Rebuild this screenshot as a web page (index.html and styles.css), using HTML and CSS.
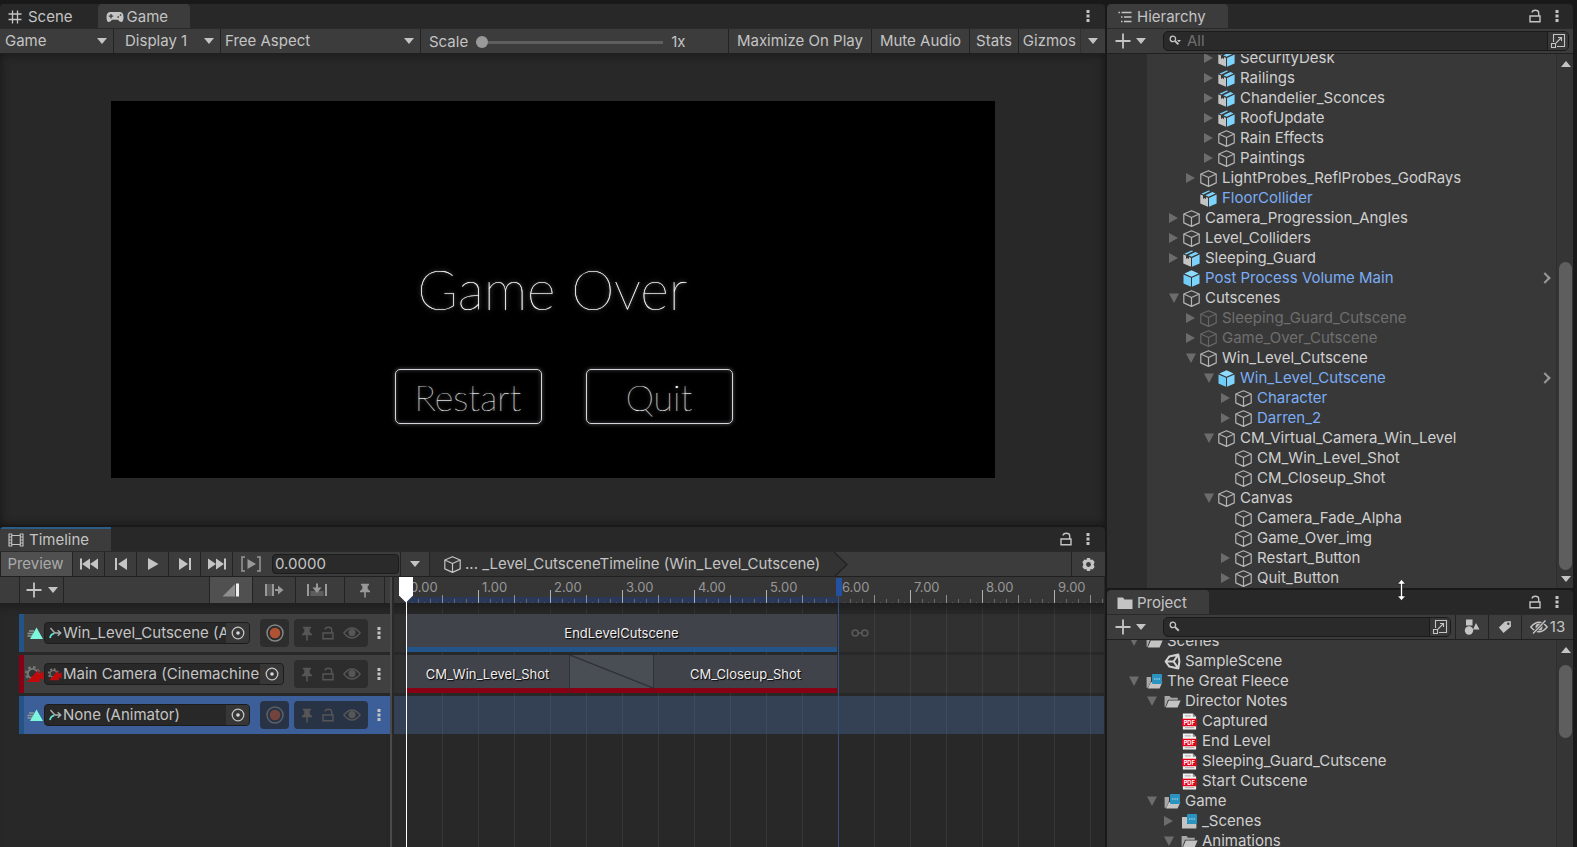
FILE: index.html
```
<!DOCTYPE html>
<html lang="en">
  <head>
    <meta charset="UTF-8" />
    <meta name="viewport" content="width=device-width, initial-scale=1.0" />
    <title>The Great Fleece - Editor</title>
    <link rel="stylesheet" href="styles.css">
  </head>
  <body>
    <!-- icon sprite -->
    <svg class="sprite" aria-hidden="true">
      <symbol id="cube" viewBox="0 0 17 17">
        <path d="M8.5 0.7L16.2 4V12.9L8.5 16.4L0.8 12.9V4ZM0.8 4L8.5 7.5L16.2 4M8.5 7.5V16.4" fill="none" stroke="currentColor" stroke-width="1.2" stroke-linejoin="round"/>
      </symbol>
      <symbol id="prefab" viewBox="0 0 17 17">
        <path d="M8.5 0.3L15.6 3.5L8.5 6.8L1.4 3.5Z" fill="#8fdcff"/>
        <path d="M0.5 4.5L8 7.8V16.8L0.5 13.4Z" fill="#6fcdf7"/>
        <path d="M16.5 4.5L9 7.8V16.8L16.5 13.4Z" fill="#7dd3fb"/>
      </symbol>
      <symbol id="model" viewBox="0 0 17 17">
        <path d="M0.3 4.5L3 5.6V9L4.5 8L6 9.2V7L8 7.9V16.8L0.3 13.4Z" fill="#c4c4c4"/>
        <path d="M1.4 3.7L8.6 0.4L10.4 1.1L3.4 4.5ZM5.4 5.3L12.4 2L15.6 3.4L8.5 6.8Z" fill="#7dd3fb"/>
        <path d="M16.6 4.5L9 7.9V16.8L16.6 13.4Z" fill="#7dd3fb"/>
      </symbol>
      <symbol id="lock" viewBox="0 0 12 14">
        <path d="M1 7H11V12.8H1ZM9.7 7V4Q9.7 1.2 6.3 1.2Q3.3 1.2 3 3.5" fill="none" stroke="currentColor" stroke-width="1.4"/>
      </symbol>
      <symbol id="dots" viewBox="0 0 4 14">
        <path d="M0.5 1H3.5V4H0.5ZM0.5 5.5H3.5V8.5H0.5ZM0.5 10H3.5V13H0.5Z" fill="currentColor"/>
      </symbol>
      <symbol id="plus" viewBox="0 0 16 16">
        <path d="M8 0.5V15.5M0.5 8H15.5" stroke="currentColor" stroke-width="1.8"/>
      </symbol>
      <symbol id="popout" viewBox="0 0 16 16">
        <path d="M3.5 9V1.5H14.5V13.5H7M1.5 10.5H5.5V14.5H1.5ZM6 10L11.5 4.5M8 4.5H11.5V8" fill="none" stroke="currentColor" stroke-width="1.1"/>
      </symbol>
      <symbol id="magnifier" viewBox="0 0 12 12">
        <path d="M5.9 5.9L9.8 9.8" stroke="currentColor" stroke-width="2"/>
        <circle cx="3.9" cy="3.9" r="2.7" fill="none" stroke="currentColor" stroke-width="1.3"/>
      </symbol>
      <symbol id="magnifier-menu" viewBox="0 0 12 12">
        <path d="M5.9 5.9L9.4 9.4" stroke="currentColor" stroke-width="2"/>
        <circle cx="3.9" cy="3.9" r="2.7" fill="none" stroke="currentColor" stroke-width="1.3"/>
        <path d="M8 5H12L10 7.2Z" fill="currentColor"/>
      </symbol>
      <symbol id="folder" viewBox="0 0 16 14">
        <path d="M0.5 1.5H6L7.5 3.5H15.5V13H0.5Z" fill="currentColor"/>
      </symbol>
      <symbol id="folder-open" viewBox="0 0 17 14">
        <path d="M0.6 1.5H5.6L7 3.2H13.8V5.2H4L1.4 12.2L0.6 12.5Z" fill="#a8a8a8"/>
        <path d="M4.8 5.9H16.6L13.6 13H1.8Z" fill="#c4c4c4"/>
      </symbol>
      <symbol id="folder-badge" viewBox="0 0 17 17">
        <path d="M0.6 4H5V8L2 14.6L0.6 15Z" fill="#a8a8a8"/>
        <path d="M5 9H16.4L13.6 15.6H1.8Z" fill="#c4c4c4"/>
        <rect x="6" y="1" width="10" height="10" rx="1" fill="#2a93c0"/>
        <path d="M8 6H9.4M10.3 6H11.7M12.6 6H14" stroke="#bfe6f5" stroke-width="1.2"/>
      </symbol>
      <symbol id="folder-closed-badge" viewBox="0 0 17 17">
        <path d="M1 4H6V11H15.4V15.6H1Z" fill="#c4c4c4"/>
        <rect x="6" y="1" width="10" height="10" rx="1" fill="#2a93c0"/>
        <path d="M8 6H9.4M10.3 6H11.7M12.6 6H14" stroke="#bfe6f5" stroke-width="1.2"/>
      </symbol>
      <symbol id="pdf" viewBox="0 0 17 18">
        <path d="M1.5 0.5H12L15.5 4V17.5H1.5Z" fill="#f2f2f2"/>
        <path d="M3.5 3H10M3.5 15.5H13.5" stroke="#b5b5b5" stroke-width="1.2"/>
        <path d="M12 0.5L15.5 4H12Z" fill="#8a8a8a"/>
        <path d="M0.5 6H16V14H0.5Z" fill="#e2051b"/>
        <text class="pdf-label" x="8.2" y="12.4">PDF</text>
      </symbol>
      <symbol id="scene" viewBox="0 0 16 16">
        <path d="M13.5 1.5L5 3.2L1.5 8L5 12.8L13.5 14.5L14.5 8ZM1.5 8H9M9 8L13.5 1.5M9 8L13.5 14.5" fill="none" stroke="#d2d2d2" stroke-width="1.9" stroke-linejoin="round"/>
      </symbol>
      <symbol id="anim" viewBox="0 0 16 13">
        <path d="M2 4H7M0.5 6.5H6M0.5 9H5" stroke="#8a9a98" stroke-width="1.3"/>
        <path d="M9.5 0.5L16 12H3Z" fill="#7cf7dd"/>
      </symbol>
      <symbol id="animator" viewBox="0 0 13 12">
        <path d="M1 11Q1.5 7.5 5.5 6.2" fill="none" stroke="#5fe0cf" stroke-width="1.8"/>
        <path d="M1.5 1L4.5 4.5L6.5 6H11.5M8.7 3.2L11.7 6L8.7 8.8" fill="none" stroke="#a9adad" stroke-width="1.5"/>
      </symbol>
      <symbol id="cinemachine" viewBox="0 0 20 17">
        <circle cx="8.5" cy="7.5" r="6.3" fill="none" stroke="#777" stroke-width="2.4" stroke-dasharray="2.6 2.3"/>
        <circle cx="8.5" cy="7.5" r="4.6" fill="#333" stroke="#777" stroke-width="1.8"/>
        <path d="M3 16L14.5 3.5V8L19.5 5.5V14L15.8 12.3V16Z" fill="#c20a0a"/>
      </symbol>
      <symbol id="pin" viewBox="0 0 12 15">
        <path d="M2 0.8H10V2.4H8.7V6L11 8V9.2H6.8V14.5H5.2V9.2H1V8L3.3 6V2.4H2Z" fill="currentColor"/>
      </symbol>
      <symbol id="eye" viewBox="0 0 18 12">
        <path d="M0.8 6Q9 -4 17.2 6Q9 16 0.8 6Z" fill="none" stroke="currentColor" stroke-width="1.3"/>
        <circle cx="9" cy="5.6" r="3.6" fill="currentColor"/>
      </symbol>
      <symbol id="picker" viewBox="0 0 14 14">
        <circle cx="7" cy="7" r="5.8" fill="none" stroke="#c4c4c4" stroke-width="1.3"/>
        <circle cx="7" cy="7" r="1.8" fill="#d8d8d8"/>
      </symbol>
      <symbol id="record" viewBox="0 0 18 18">
        <circle cx="9" cy="9" r="8" fill="none" stroke="#858585" stroke-width="1.5"/>
        <circle cx="9" cy="9" r="5.3" fill="#b05335"/>
      </symbol>
    </svg>

    <div class="editor">
      <main class="column">
        <section class="panel">
          <header class="tabs">
            <button class="tab tab-scene">
              <svg width="14" height="14" viewBox="0 0 14 14"><path d="M4.5 0.5V13.5M9.5 0.5V13.5M0.5 4H13.5M0.5 9.5H13.5" stroke="currentColor" stroke-width="1.3"/></svg>
              Scene
            </button>
            <button class="tab active tab-game">
              <svg width="18" height="12" viewBox="0 0 18 12"><path d="M4.5 1H13.5Q17.5 1 17.5 6Q17.5 11 15.3 11Q13.5 11 12 8.7H6Q4.5 11 2.7 11Q0.5 11 0.5 6Q0.5 1 4.5 1Z" fill="currentColor"/><path d="M5 3V7.4M2.8 5.2H7.2M11.5 6H13M13.8 4H15.3" stroke="#3c3c3c" stroke-width="1.3"/></svg>
              Game
            </button>
            <div class="tab-tools">
              <button aria-label="Game menu"><svg width="4" height="14"><use href="#dots"/></svg></button>
            </div>
          </header>
          <div class="toolbar">
            <label class="dropdown mode"><select aria-label="View"><option>Game</option></select></label>
            <label class="dropdown display"><select aria-label="Display"><option>Display 1</option></select></label>
            <label class="dropdown aspect"><select aria-label="Aspect"><option>Free Aspect</option></select></label>
            <div class="scale">
              <label for="scale">Scale</label>
              <input type="range" id="scale" min="1" max="5" value="1">
              <output for="scale">1x</output>
            </div>
            <button class="tool wide">Maximize On Play</button>
            <button class="tool wide">Mute Audio</button>
            <button class="tool">Stats</button>
            <button class="tool gizmos">Gizmos</button>
            <button class="tool gizmos-menu" aria-label="Gizmos menu"><i class="caret"></i></button>
          </div>
          <div class="game-view">
            <div class="game-screen">
              <h1>Game Over</h1>
              <div class="game-buttons">
                <button>Restart</button>
                <button>Quit</button>
              </div>
            </div>
          </div>
        </section>

        <section class="panel">
          <header class="tabs">
            <button class="tab active focused tab-timeline">
              <svg width="16" height="14" viewBox="0 0 16 14"><path d="M1 0.5V13.5M15 0.5V13.5M3.7 0.5V13.5M12.3 0.5V13.5M3.7 2.5H12.3M3.7 11.5H12.3M1 1H3.7M1 4H3.7M1 7H3.7M1 10H3.7M1 13H3.7M12.3 1H15M12.3 4H15M12.3 7H15M12.3 10H15M12.3 13H15" fill="none" stroke="currentColor" stroke-width="1.1"/></svg>
              Timeline
            </button>
            <div class="tab-tools">
              <button aria-label="Lock"><svg width="12" height="14"><use href="#lock"/></svg></button>
              <button aria-label="Timeline menu"><svg width="4" height="14"><use href="#dots"/></svg></button>
            </div>
          </header>
          <div class="toolbar transport">
            <button class="tool preview">Preview</button>
            <button class="tool step" aria-label="Go to start"><svg width="20" height="12" viewBox="0 0 20 12"><path d="M1 0.5H3V11.5H1ZM11 0.5V11.5L3 6ZM19 0.5V11.5L11 6Z" fill="currentColor"/></svg></button>
            <button class="tool step" aria-label="Previous frame"><svg width="14" height="12" viewBox="0 0 14 12"><path d="M1 0H3V12H1ZM13 0V12L4 6Z" fill="currentColor"/></svg></button>
            <button class="tool step" aria-label="Play"><svg width="12" height="12" viewBox="0 0 12 12"><path d="M1 0L11.5 6L1 12Z" fill="currentColor"/></svg></button>
            <button class="tool step" aria-label="Next frame"><svg width="14" height="12" viewBox="0 0 14 12"><path d="M11 0H13V12H11ZM1 0V12L10 6Z" fill="currentColor"/></svg></button>
            <button class="tool step" aria-label="Go to end"><svg width="20" height="12" viewBox="0 0 20 12"><path d="M17 0.5H19V11.5H17ZM9 0.5V11.5L17 6ZM1 0.5V11.5L9 6Z" fill="currentColor"/></svg></button>
            <button class="tool step range dim" aria-label="Play range"><svg width="20" height="16" viewBox="0 0 20 16"><path d="M4 1H1V15H4M16 1H19V15H16" fill="none" stroke="currentColor" stroke-width="1.5"/><path d="M6.5 3L15 8L6.5 13Z" fill="currentColor"/></svg></button>
            <input class="time" type="text" aria-label="Current time" value="0.0000">
            <button class="tool asset-menu" aria-label="Select timeline"><i class="caret"></i></button>
            <div class="crumb">
              <svg width="17" height="17"><use href="#cube"/></svg>
              <span>... _Level_CutsceneTimeline (Win_Level_Cutscene)</span>
            </div>
            <svg class="crumb-end" width="14" height="25" viewBox="0 0 14 25"><path d="M0 0L13 12.5L0 25Z" fill="#333"/><path d="M0 0L13 12.5L0 25" fill="none" stroke="#232323" stroke-width="1.3"/></svg>
            <button class="tool settings" aria-label="Timeline settings"><svg width="13" height="13" viewBox="0 0 13 13"><path d="M5 0H8L8.6 1.9L10.5 1.4L12.6 4L11.6 6.5L12.6 9L10.5 11.6L8.6 11.1L8 13H5L4.4 11.1L2.5 11.6L0.4 9L1.4 6.5L0.4 4L2.5 1.4L4.4 1.9Z" fill="currentColor"/><circle cx="6.5" cy="6.5" r="2.4" fill="#3c3c3c"/></svg></button>
          </div>

          <div class="timeline">
            <div class="track-list">
              <div class="toolbar track-tools">
                <button class="tool add" aria-label="Add track"><svg width="16" height="16"><use href="#plus"/></svg><i class="caret"></i></button>
                <button class="tool edit-mode first on" aria-label="Mix mode"><svg width="18" height="14" viewBox="0 0 18 14"><path d="M0.5 13.5L13 1V13.5Z" fill="#8f8f8f"/><path d="M14 0.5H17V13.5H14Z" fill="#eee"/></svg></button>
                <button class="tool edit-mode dim" aria-label="Ripple mode"><svg width="20" height="14" viewBox="0 0 20 14"><path d="M1 1H3V13H1ZM8 1H10V13H8Z" fill="currentColor"/><path d="M3 1H8V13H3Z" fill="#5a5a5a"/><path d="M11 6H14V2.5L19.5 7L14 11.5V8H11Z" fill="currentColor"/></svg></button>
                <button class="tool edit-mode dim" aria-label="Replace mode"><svg width="22" height="14" viewBox="0 0 22 14"><path d="M1 1H3V13H1ZM19 1H21V13H19Z" fill="currentColor"/><path d="M4.5 8H17.5V13H4.5Z" fill="#5e5e5e"/><path d="M10 0.5H12V4.5H15.5L11 10L6.5 4.5H10Z" fill="currentColor"/></svg></button>
                <button class="tool marker-pin dim" aria-label="Show markers"><svg width="12" height="15"><use href="#pin"/></svg></button>
              </div>
              <div class="tracks">
                <div class="track">
                  <svg width="16" height="13"><use href="#anim"/></svg>
                  <div class="binding">
                    <svg width="13" height="12"><use href="#animator"/></svg>
                    <span>Win_Level_Cutscene (Animator)</span>
                    <button aria-label="Pick object"><svg width="14" height="14"><use href="#picker"/></svg></button>
                  </div>
                  <button class="rec" aria-label="Record"><svg width="18" height="18"><use href="#record"/></svg></button>
                  <div class="flags">
                    <svg width="12" height="15"><use href="#pin"/></svg>
                    <svg width="12" height="14"><use href="#lock"/></svg>
                    <svg width="18" height="12"><use href="#eye"/></svg>
                  </div>
                  <button class="more" aria-label="Track menu"><svg width="4" height="14"><use href="#dots"/></svg></button>
                </div>
                <div class="track camera">
                  <svg width="20" height="17"><use href="#cinemachine"/></svg>
                  <div class="binding">
                    <svg width="15" height="13"><use href="#cinemachine"/></svg>
                    <span>Main Camera (CinemachineBrain)</span>
                    <button aria-label="Pick object"><svg width="14" height="14"><use href="#picker"/></svg></button>
                  </div>
                  <div class="flags">
                    <svg width="12" height="15"><use href="#pin"/></svg>
                    <svg width="12" height="14"><use href="#lock"/></svg>
                    <svg width="18" height="12"><use href="#eye"/></svg>
                  </div>
                  <button class="more" aria-label="Track menu"><svg width="4" height="14"><use href="#dots"/></svg></button>
                </div>
                <div class="track selected">
                  <svg width="16" height="13"><use href="#anim"/></svg>
                  <div class="binding">
                    <svg width="13" height="12"><use href="#animator"/></svg>
                    <span>None (Animator)</span>
                    <button aria-label="Pick object"><svg width="14" height="14"><use href="#picker"/></svg></button>
                  </div>
                  <button class="rec" aria-label="Record" disabled><svg width="18" height="18"><use href="#record"/></svg></button>
                  <div class="flags">
                    <svg width="12" height="15"><use href="#pin"/></svg>
                    <svg width="12" height="14"><use href="#lock"/></svg>
                    <svg width="18" height="12"><use href="#eye"/></svg>
                  </div>
                  <button class="more" aria-label="Track menu"><svg width="4" height="14"><use href="#dots"/></svg></button>
                </div>
              </div>
            </div>

            <div class="lanes-area">
              <div class="ruler">
                <span>0.00</span><span>1.00</span><span>2.00</span><span>3.00</span><span>4.00</span>
                <span>5.00</span><span>6.00</span><span>7.00</span><span>8.00</span><span>9.00</span>
              </div>
              <div class="lanes">
                <div class="lane">
                  <div class="clip anim">EndLevelCutscene</div>
                  <svg class="loop" width="18" height="8" viewBox="0 0 18 8"><circle cx="4.2" cy="4" r="3" fill="none" stroke="#5a5a5a" stroke-width="1.6"/><circle cx="13.8" cy="4" r="3" fill="none" stroke="#5a5a5a" stroke-width="1.6"/><path d="M7 4H11" stroke="#5a5a5a" stroke-width="1.6"/></svg>
                </div>
                <div class="lane">
                  <div class="clip shot win-shot">CM_Win_Level_Shot</div>
                  <div class="clip shot blend"><svg width="100%" height="100%" viewBox="0 0 85 38" preserveAspectRatio="none"><path d="M0 0L85 38" stroke="#303235" stroke-width="1.5"/></svg></div>
                  <div class="clip shot closeup-shot">CM_Closeup_Shot</div>
                </div>
                <div class="lane selected"></div>
              </div>
              <div class="end-marker"></div>
              <svg class="playhead" width="14" height="25" viewBox="0 0 14 25"><path d="M0 0H14V18.5L7.5 25H6.5L0 18.5Z" fill="#fff"/></svg>
              <div class="playhead-line"></div>
            </div>
          </div>
        </section>
      </main>

      <aside class="column side">
        <section class="panel">
          <header class="tabs">
            <button class="tab active tab-hierarchy">
              <svg width="14" height="12" viewBox="0 0 14 12"><path d="M0.5 1.5H2M3.5 1.5H13.5M3 6H4.5M6 6H13.5M3 10.5H4.5M6 10.5H13.5" stroke="currentColor" stroke-width="1.3"/></svg>
              Hierarchy
            </button>
            <div class="tab-tools">
              <button aria-label="Lock"><svg width="12" height="14"><use href="#lock"/></svg></button>
              <button aria-label="Hierarchy menu"><svg width="4" height="14"><use href="#dots"/></svg></button>
            </div>
          </header>
          <div class="toolbar">
            <button class="create" aria-label="Create"><svg width="16" height="16"><use href="#plus"/></svg><i class="caret"></i></button>
            <div class="search">
              <svg width="12" height="12"><use href="#magnifier-menu"/></svg>
              <input type="search" aria-label="Search hierarchy" placeholder="All">
              <button aria-label="Open search window"><svg width="16" height="16"><use href="#popout"/></svg></button>
            </div>
          </div>
          <div class="list-wrap">
            <ul class="tree hierarchy">
              <li class="l3"><i class="fold"></i><svg><use href="#model"/></svg>SecurityDesk</li>
              <li class="l3"><i class="fold"></i><svg><use href="#model"/></svg>Railings</li>
              <li class="l3"><i class="fold"></i><svg><use href="#model"/></svg>Chandelier_Sconces</li>
              <li class="l3"><i class="fold"></i><svg><use href="#model"/></svg>RoofUpdate</li>
              <li class="l3"><i class="fold"></i><svg><use href="#cube"/></svg>Rain Effects</li>
              <li class="l3"><i class="fold"></i><svg><use href="#cube"/></svg>Paintings</li>
              <li class="l2"><i class="fold"></i><svg><use href="#cube"/></svg>LightProbes_ReflProbes_GodRays</li>
              <li class="l2 blue"><i class="fold none"></i><svg><use href="#model"/></svg>FloorCollider</li>
              <li class="l1"><i class="fold"></i><svg><use href="#cube"/></svg>Camera_Progression_Angles</li>
              <li class="l1"><i class="fold"></i><svg><use href="#cube"/></svg>Level_Colliders</li>
              <li class="l1"><i class="fold"></i><svg><use href="#model"/></svg>Sleeping_Guard</li>
              <li class="l1 blue"><i class="fold none"></i><svg><use href="#prefab"/></svg>Post Process Volume Main<i class="open-prefab"></i></li>
              <li class="l1"><i class="fold open"></i><svg><use href="#cube"/></svg>Cutscenes</li>
              <li class="l2 off"><i class="fold"></i><svg><use href="#cube"/></svg>Sleeping_Guard_Cutscene</li>
              <li class="l2 off"><i class="fold"></i><svg><use href="#cube"/></svg>Game_Over_Cutscene</li>
              <li class="l2"><i class="fold open"></i><svg><use href="#cube"/></svg>Win_Level_Cutscene</li>
              <li class="l3 blue"><i class="fold open"></i><svg><use href="#prefab"/></svg>Win_Level_Cutscene<i class="open-prefab"></i></li>
              <li class="l4 blue"><i class="fold"></i><svg><use href="#cube"/></svg>Character</li>
              <li class="l4 blue"><i class="fold"></i><svg><use href="#cube"/></svg>Darren_2</li>
              <li class="l3"><i class="fold open"></i><svg><use href="#cube"/></svg>CM_Virtual_Camera_Win_Level</li>
              <li class="l4"><i class="fold none"></i><svg><use href="#cube"/></svg>CM_Win_Level_Shot</li>
              <li class="l4"><i class="fold none"></i><svg><use href="#cube"/></svg>CM_Closeup_Shot</li>
              <li class="l3"><i class="fold open"></i><svg><use href="#cube"/></svg>Canvas</li>
              <li class="l4"><i class="fold none"></i><svg><use href="#cube"/></svg>Camera_Fade_Alpha</li>
              <li class="l4"><i class="fold none"></i><svg><use href="#cube"/></svg>Game_Over_img</li>
              <li class="l4"><i class="fold"></i><svg><use href="#cube"/></svg>Restart_Button</li>
              <li class="l4"><i class="fold"></i><svg><use href="#cube"/></svg>Quit_Button</li>
            </ul>
            <div class="scrollbar"><i class="up"></i><div class="rail low"><i class="thumb"></i></div><i class="down"></i></div>
          </div>
        </section>

        <section class="panel">
          <header class="tabs">
            <button class="tab active tab-project">
              <svg width="16" height="14"><use href="#folder"/></svg>
              Project
            </button>
            <div class="tab-tools">
              <button aria-label="Lock"><svg width="12" height="14"><use href="#lock"/></svg></button>
              <button aria-label="Project menu"><svg width="4" height="14"><use href="#dots"/></svg></button>
            </div>
          </header>
          <div class="toolbar">
            <button class="create" aria-label="Create"><svg width="16" height="16"><use href="#plus"/></svg><i class="caret"></i></button>
            <div class="search">
              <svg width="12" height="12"><use href="#magnifier"/></svg>
              <input type="search" aria-label="Search project">
              <button aria-label="Open search window"><svg width="16" height="16"><use href="#popout"/></svg></button>
            </div>
            <button class="tool filter" aria-label="Search by type"><svg width="16" height="16" viewBox="0 0 16 16"><path d="M2 0.5H8.5V6.5H2ZM9 10.5L12 4L15.5 10.5Z" fill="currentColor"/><circle cx="5" cy="11.5" r="4.2" fill="currentColor"/></svg></button>
            <button class="tool filter" aria-label="Search by label"><svg width="14" height="14" viewBox="0 0 14 14"><path d="M7 1.5L12.8 1L13 6.5L5.5 13L0.8 7.5Z" fill="currentColor"/><circle cx="10.3" cy="3.8" r="1.2" fill="#3c3c3c"/></svg></button>
            <button class="tool hidden-count"><svg width="18" height="14" viewBox="0 0 18 14"><path d="M0.8 7Q9 -2.5 17.2 7Q9 16.5 0.8 7Z" fill="none" stroke="currentColor" stroke-width="1.4"/><circle cx="9" cy="7" r="3.5" fill="currentColor"/><path d="M3 13.5L15.5 0.5" stroke="#3c3c3c" stroke-width="3"/><path d="M3 13.5L15.5 0.5" stroke="currentColor" stroke-width="1.4"/></svg>13</button>
          </div>
          <div class="list-wrap">
            <ul class="tree project">
              <li class="l1"><i class="fold open"></i><svg><use href="#folder-open"/></svg>Scenes</li>
              <li class="l2"><i class="fold none"></i><svg><use href="#scene"/></svg>SampleScene</li>
              <li class="l1"><i class="fold open"></i><svg><use href="#folder-badge"/></svg>The Great Fleece</li>
              <li class="l2"><i class="fold open"></i><svg><use href="#folder-open"/></svg>Director Notes</li>
              <li class="l3"><i class="fold none"></i><svg><use href="#pdf"/></svg>Captured</li>
              <li class="l3"><i class="fold none"></i><svg><use href="#pdf"/></svg>End Level</li>
              <li class="l3"><i class="fold none"></i><svg><use href="#pdf"/></svg>Sleeping_Guard_Cutscene</li>
              <li class="l3"><i class="fold none"></i><svg><use href="#pdf"/></svg>Start Cutscene</li>
              <li class="l2"><i class="fold open"></i><svg><use href="#folder-badge"/></svg>Game</li>
              <li class="l3"><i class="fold"></i><svg><use href="#folder-closed-badge"/></svg>_Scenes</li>
              <li class="l3"><i class="fold open"></i><svg><use href="#folder-open"/></svg>Animations</li>
            </ul>
            <div class="scrollbar"><i class="up"></i><div class="rail high"><i class="thumb"></i></div></div>
          </div>
        </section>
        <svg class="resize-cursor" width="9" height="22" viewBox="0 0 9 22"><path d="M4.5 0.5L8.5 5H5.5V17H8.5L4.5 21.5L0.5 17H3.5V5H0.5Z" fill="#fff" stroke="#111" stroke-width="0.6"/></svg>
      </aside>
    </div>
  </body>
</html>
```
FILE: styles.css
```
* {
  box-sizing: border-box;
}
body {
  margin: 0;
  background: #191919;
  color: #c4c4c4;
  font-family: Inter, 'Liberation Sans', sans-serif;
  font-size: 15px;
  line-height: 20px;
}
button,
input,
select {
  margin: 0;
  padding: 0;
  border: none;
  background: none;
  color: inherit;
  font: inherit;
  outline: none;
}
svg {
  flex: none;
  display: block;
}
.sprite {
  position: absolute;
  width: 0;
  height: 0;
}
.pdf-label {
  fill: #fff;
  font-size: 6px;
  font-weight: 700;
  text-anchor: middle;
}

/* window layout */
.editor {
  display: grid;
  grid-template-columns: minmax(0, 1105fr) minmax(0, 466fr);
  gap: 2px;
  height: 100vh;
  padding: 4px 4px 0 0;
  overflow: hidden;
}
.column {
  display: grid;
  grid-template-rows: minmax(0, 521fr) minmax(0, 320fr);
  gap: 2px;
  min-height: 0;
}
.side {
  position: relative;
  grid-template-rows: minmax(0, 584fr) minmax(0, 257fr);
}
.panel {
  display: flex;
  flex-direction: column;
  min-width: 0;
  min-height: 0;
  background: #282828;
  border-radius: 4px 4px 0 0;
  overflow: hidden;
}

/* tabs */
.tabs {
  display: flex;
  height: 24px;
  flex: none;
}
.tab {
  display: flex;
  align-items: center;
  gap: 6px;
  padding: 2px 22px 0 8px;
  border-radius: 4px 4px 0 0;
}
.tab.active {
  background: #3c3c3c;
}
.tab.focused {
  border-top: 2px solid #2c5d87;
  padding-top: 0;
  border-radius: 0;
}
.tab-scene {
  padding-right: 25px;
}
.tab-game {
  gap: 3px;
}
.tab-timeline {
  gap: 5px;
}
.tab-hierarchy {
  padding-left: 11px;
  gap: 5px;
}
.tab-project {
  padding-left: 10px;
  gap: 4px;
}
.tab-tools {
  display: flex;
  align-items: center;
  gap: 14px;
  margin-left: auto;
  padding: 0 15px 0 14px;
}
.side .tab-tools {
  padding-right: 14px;
}

/* toolbars */
.toolbar {
  display: flex;
  align-items: stretch;
  flex: none;
  height: 26px;
  background: #3c3c3c;
  border-top: 1px solid #2a2a2a;
  border-bottom: 1px solid #202020;
}
.tool {
  display: flex;
  align-items: center;
  justify-content: center;
  flex: none;
  padding: 0 6px;
  border-left: 1px solid #232323;
}
.tool.wide {
  padding: 0 8px;
}
.dim {
  color: #999;
}
.caret {
  display: block;
  border: 5px solid transparent;
  border-top: 6px solid #c4c4c4;
  border-bottom: none;
}
.dropdown {
  display: flex;
  align-items: center;
  flex: none;
  padding: 0 6px 0 5px;
  border-right: 1px solid #232323;
}
.dropdown::after {
  content: "";
  border: 5px solid transparent;
  border-top: 6px solid #c4c4c4;
  border-bottom: none;
}
.dropdown select {
  flex: 1;
  min-width: 0;
  appearance: none;
}
.mode {
  width: 114px;
}
.display {
  width: 107px;
  padding-left: 11px;
}
.aspect {
  width: 200px;
  padding-left: 4px;
}
.scale {
  display: flex;
  align-items: center;
  flex: 1;
  gap: 8px;
  padding: 2px 8px 0;
}
.scale input {
  appearance: none;
  width: 187px;
  height: 14px;
}
.scale input::-webkit-slider-runnable-track {
  height: 3px;
  background: #5e5e5e;
}
.scale input::-webkit-slider-thumb {
  appearance: none;
  width: 12px;
  height: 12px;
  margin-top: -5px;
  border-radius: 50%;
  background: #999;
}
.gizmos {
  padding: 0 4px;
}
.gizmos-menu {
  padding: 0 7px;
  border-left-color: #303030;
}

/* game view */
.game-view {
  flex: 1;
  display: flex;
  align-items: center;
  justify-content: center;
  min-height: 0;
  box-shadow: inset 0 0 10px #161616;
}
.game-screen {
  display: grid;
  grid-template-rows: 1fr 60px 1fr;
  justify-items: center;
  width: 80%;
  height: 80%;
  background: #000;
  color: #fff;
  font-family: Lato, sans-serif;
}
.game-screen h1 {
  grid-row: 2;
  margin: 0;
  font-size: 55px;
  line-height: 60px;
  font-weight: 100;
  text-shadow: 0 0 1px #fff, 0 0 5px #aaa;
}
.game-buttons {
  grid-row: 3;
  display: flex;
  align-items: flex-start;
  gap: 44px;
  padding: 50px 0 0 22px;
}
.game-buttons button {
  width: 147px;
  height: 55px;
  border: 1px solid #d5d5dc;
  border-radius: 5px;
  font-size: 36px;
  font-weight: 100;
  box-shadow: 0 0 4px #555, inset 0 0 4px #444;
  text-shadow: 0 0 1px #ccc, 0 0 4px #777;
}

/* timeline */
.preview {
  width: 72px;
  background: #505050;
  color: #aaa;
}
.tool.preview {
  padding: 0 2px 0 0;
}
.step {
  width: 32px;
}
.tool.step {
  padding: 0;
}
.step.range {
  width: 36px;
}
.time {
  width: 127px;
  margin: 2px 1px 2px 4px;
  padding: 0 2px;
  background: #2a2a2a;
  border: 1px solid #1c1c1c;
  border-radius: 4px;
}
.asset-menu {
  width: 29px;
}
.crumb {
  display: flex;
  align-items: center;
  gap: 4px;
  min-width: 0;
  padding: 0 14px;
  background: #333;
  border-left: 1px solid #232323;
  white-space: nowrap;
}
.settings {
  width: 33px;
  margin: 0 1px 0 auto;
}
.timeline {
  display: flex;
  flex: 1;
  min-height: 0;
}
.track-list {
  display: flex;
  flex-direction: column;
  width: 392px;
  flex: none;
  border-right: 2px solid #4a4a4a;
}
.track-tools {
  border-top: none;
  border-bottom: none;
}
.add {
  gap: 6px;
  width: 45px;
  margin-left: 19px;
  border-right: 1px solid #232323;
}
.edit-mode {
  width: 43px;
}
.edit-mode.first {
  margin-left: auto;
}
.edit-mode.on {
  background: #505050;
}
.marker-pin {
  width: 41px;
  margin: 0 5px 0 6px;
  border-right: 1px solid #232323;
}
.tracks,
.lanes {
  display: flex;
  flex-direction: column;
  gap: 3px;
  flex: 1;
  padding-top: 11px;
  box-shadow: inset 0 10px 8px -6px #1e1e1e;
}
.track {
  display: flex;
  align-items: center;
  height: 38px;
  margin-left: 19px;
  padding: 0 9px 0 3px;
  border-left: 5px solid #245487;
  background: #404040;
}
.camera {
  padding-left: 0;
  border-left-color: #870014;
}
.track.selected {
  background: #3d5f99;
}
.binding {
  display: flex;
  align-items: center;
  flex: 1;
  min-width: 0;
  height: 22px;
  margin: 0 10px 0 1px;
  padding-left: 4px;
  background: #282828;
  border: 1px solid #1c1c1c;
  border-radius: 4px;
}
.camera .binding {
  margin-left: 0;
  padding-left: 2px;
}
.binding span {
  flex: 1;
  margin-left: 1px;
  overflow: hidden;
  white-space: nowrap;
}
.binding button {
  display: flex;
  align-items: center;
  justify-content: center;
  width: 23px;
  height: 20px;
  background: #373737;
  border-radius: 0 3px 3px 0;
}
.rec {
  display: flex;
  align-items: center;
  justify-content: center;
  width: 29px;
  height: 28px;
  margin-right: 5px;
  background: #2d2d2d;
  border-radius: 4px;
}
.rec:disabled {
  background: #293346;
}
.rec:disabled svg {
  opacity: 0.55;
}
.flags {
  display: flex;
  align-items: center;
  justify-content: space-between;
  width: 74px;
  height: 28px;
  padding: 0 7px;
  background: #2d2d2d;
  border-radius: 4px;
  color: #565656;
}
.selected .flags {
  background: #293346;
}
.more {
  margin-left: 9px;
}

/* one second is 72px wide and the first one starts 12px in */
.lanes-area {
  position: relative;
  display: flex;
  flex-direction: column;
  flex: 1;
  min-width: 0;
  margin: 0 1px 0 2px;
  overflow: hidden;
}
.ruler {
  display: flex;
  flex: none;
  height: 26px;
  padding-left: 16px;
  background:
    repeating-linear-gradient(90deg, #b0b0b0 0 1px, transparent 1px 72px) 12px 100% / 100% 13px no-repeat,
    repeating-linear-gradient(90deg, #8e8e8e 0 1px, transparent 1px 36px) 12px 100% / 100% 8px no-repeat,
    repeating-linear-gradient(90deg, #66696f 0 1px, transparent 1px 12px) 12px 100% / 100% 4px no-repeat,
    repeating-linear-gradient(90deg, #55585e 0 1px, transparent 1px 6px) 12px 100% / 100% 1px no-repeat,
    linear-gradient(#2a395a, #2a395a) 12px 100% / 432px 6px no-repeat,
    #363636;
}
.ruler span {
  flex: 0 0 72px;
  color: #969696;
  font-size: 13px;
}
.lanes {
  background: repeating-linear-gradient(90deg, #363636 0 1px, transparent 1px 36px) 12px 0 no-repeat;
}
.lane {
  display: flex;
  align-items: center;
  height: 38px;
  flex: none;
  padding-left: 12px;
  background: rgba(255, 255, 255, 0.04);
}
.lane.selected {
  background: rgba(84, 124, 190, 0.3);
}
.clip {
  display: flex;
  align-items: center;
  justify-content: center;
  height: 38px;
  background: #41434a;
  color: #eee;
  font-size: 13px;
  text-shadow: 1px 1px 1px #000;
}
.clip.anim {
  width: 431px;
  padding-top: 4px;
  border-bottom: 5px solid #24558a;
}
.clip.shot {
  padding-top: 4px;
  border-bottom: 5px solid #870014;
}
.win-shot {
  width: 163px;
}
.clip.blend {
  width: 85px;
  padding: 0;
  background: #494d54;
  border-left: 1px solid #303235;
  border-right: 1px solid #303235;
}
.closeup-shot {
  width: 183px;
}
.loop {
  margin-left: 14px;
}
.end-marker {
  position: absolute;
  top: 1px;
  left: 442px;
  width: 6px;
  height: 18px;
  background: #2450a0;
}
.end-marker::after {
  content: "";
  position: absolute;
  top: 18px;
  left: 2px;
  width: 1px;
  height: 100vh;
  background: #35507f;
}
.playhead {
  position: absolute;
  top: 0;
  left: 5px;
}
.playhead-line {
  position: absolute;
  top: 24px;
  bottom: 0;
  left: 12px;
  width: 1px;
  background: #fff;
}

/* hierarchy and project */
.create {
  display: flex;
  align-items: center;
  gap: 5px;
  width: 56px;
  flex: none;
  padding-left: 8px;
}
.search {
  display: flex;
  align-items: center;
  flex: 1;
  min-width: 0;
  margin: 2px 4px 2px 0;
  padding-left: 5px;
  background: #2a2a2a;
  border: 1px solid #1a1a1a;
  border-radius: 5px;
}
.search input {
  flex: 1;
  min-width: 0;
  padding-left: 6px;
}
.search input::placeholder {
  color: #707070;
}
.search button {
  display: flex;
  align-items: center;
  justify-content: center;
  align-self: stretch;
  width: 21px;
  background: #383838;
  border-left: 1px solid #1a1a1a;
  border-radius: 0 4px 4px 0;
}
.filter {
  width: 33px;
}
.hidden-count {
  width: 52px;
  gap: 2px;
}
.list-wrap {
  display: flex;
  flex: 1;
  min-height: 0;
}
.tree {
  flex: 1;
  min-width: 0;
  margin: 0;
  padding: 0;
  list-style: none;
  overflow: hidden;
  background: #383838;
}
.tree li {
  display: flex;
  align-items: center;
  height: 20px;
  white-space: nowrap;
  color: #d0d0d0;
}
/* both lists are scrolled part of a row down */
.hierarchy li:first-child {
  margin-top: -6px;
}
.project li:first-child {
  margin-top: -9px;
}
.hierarchy {
  border-left: 40px solid #2d2d2d;
}
.tree svg {
  width: 17px;
  height: 17px;
  margin-right: 5px;
  color: #b4b4b4;
}
.fold {
  flex: none;
  width: 9px;
  height: 10px;
  margin-right: 5px;
  background: #6c6c6c;
  clip-path: polygon(0 0, 100% 50%, 0 100%);
}
.fold.open {
  width: 10px;
  margin-right: 4px;
  clip-path: polygon(0 5%, 100% 5%, 50% 100%);
}
.fold.none {
  visibility: hidden;
}
.l1 {
  padding-left: 22px;
}
.l2 {
  padding-left: 39px;
}
.l3 {
  padding-left: 57px;
}
.l4 {
  padding-left: 74px;
}
.project .fold {
  margin-right: 8px;
}
.project .fold.open {
  margin-right: 7px;
}
.project svg {
  margin-right: 4px;
}
.project .l2 {
  padding-left: 40px;
}
.tree .blue {
  color: #7badf5;
}
.tree .off {
  color: #6f6f6f;
}
.tree .off svg {
  color: #666;
}
.open-prefab {
  width: 8px;
  height: 8px;
  margin: 0 7px 0 auto;
  border: solid #999;
  border-width: 2px 2px 0 0;
  transform: rotate(45deg);
}
.scrollbar {
  display: flex;
  flex-direction: column;
  align-items: center;
  width: 17px;
  flex: none;
  padding: 7px 0 6px 1px;
  background: #353535;
  border-left: 1px solid #2e2e2e;
}
.up,
.down {
  border: 5px solid transparent;
  border-top: none;
  border-bottom: 6px solid #c4c4c4;
}
.down {
  border-bottom: none;
  border-top: 6px solid #c4c4c4;
}
.rail {
  flex: 1;
  display: flex;
  width: 13px;
  margin: 6px 0;
}
.thumb {
  width: 13px;
  border-radius: 7px;
  background: #5e5e5e;
}
.low {
  align-items: flex-end;
}
.low .thumb {
  height: 62%;
}
.high {
  align-items: flex-start;
  padding-top: 6px;
}
.high .thumb {
  height: 43%;
}
.resize-cursor {
  position: absolute;
  top: 575px;
  left: 290px;
}
```
